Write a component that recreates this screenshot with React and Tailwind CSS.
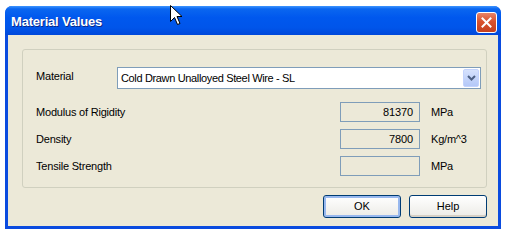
import React from 'react';

const font = { fontFamily: '"Liberation Sans", Arial, sans-serif' };

function Field({ label, value, unit }) {
  return (
    <div className="flex items-center h-[20px]">
      <span className="w-[304px] text-[11px] tracking-[-0.2px] text-black">{label}</span>
      <div className="w-[80px] h-[20px] border border-[#7F9DB9] bg-[#ECE9D8] flex items-center justify-end pr-[6px] text-[11px] tracking-[-0.1px] text-black">
        {value}
      </div>
      <span className="ml-[11px] text-[11px] tracking-[-0.2px] text-black">{unit}</span>
    </div>
  );
}

function XpButton({ children, isDefault }) {
  return (
    <button
      className={`w-[78px] h-[23px] rounded-[3px] border border-[#003C74] text-[11px] text-black bg-gradient-to-b from-white to-[#ECEBE6] ${
        isDefault ? 'shadow-[inset_0_0_0_2px_#98B8EE]' : 'shadow-[inset_0_-2px_0_#D6D0C5]'
      }`}
    >
      {children}
    </button>
  );
}

export default function App() {
  return (
    <div className="relative w-[511px] h-[241px] bg-white pt-[6px] pl-[5px]" style={font}>
      {/* Dialog window */}
      <div className="w-[496px] h-[223px] flex flex-col rounded-t-[7px] overflow-hidden bg-[#0A4BDF]">
        {/* Title bar */}
        <div className="h-[29px] flex items-center justify-between pt-[3px] pl-[6px] pr-[4px] bg-[linear-gradient(to_bottom,#3D95FF_0%,#0A66F0_10%,#0058EE_40%,#0055EA_75%,#0048DA_100%)]">
          <span className="text-white text-[13px] font-bold tracking-[-0.2px] [text-shadow:1px_1px_0_#0A2A8A]">
            Material Values
          </span>
          <div className="w-[21px] h-[21px] rounded-[3px] border border-white bg-[linear-gradient(to_bottom,#E8846A,#D9522D_45%,#C4401E)] flex items-center justify-center">
            <svg width="11" height="11" viewBox="0 0 11 11">
              <path d="M1.5 1.5 L9.5 9.5 M9.5 1.5 L1.5 9.5" stroke="white" strokeWidth="2" strokeLinecap="square" />
            </svg>
          </div>
        </div>

        {/* Body */}
        <div className="flex-1 mx-[3px] mb-[3px] bg-[#ECE9D8] pt-[14px] pl-[14px] flex flex-col">
          {/* Group box */}
          <div className="w-[465px] h-[139px] border border-[#D0D0BF] rounded-[3px] pl-[13px] pt-[17px] flex flex-col">
            <div className="flex items-center h-[22px]">
              <span className="w-[81px] text-[11px] tracking-[-0.2px] text-black -mt-[4px]">Material</span>
              <div className="w-[364px] h-[22px] border border-[#7F9DB9] bg-white flex items-center justify-between pl-[3px] pr-[1px]">
                <span className="text-[11px] tracking-[-0.35px] text-black">Cold Drawn Unalloyed Steel Wire - SL</span>
                <div className="w-[16px] h-[18px] rounded-[2px] bg-[linear-gradient(to_bottom,#D6E2FD,#B4C8F8)] border border-[#C3D3FD] flex items-center justify-center">
                  <svg width="9" height="6" viewBox="0 0 9 6">
                    <path d="M1 1 L4.5 4.5 L8 1" stroke="#4D6185" strokeWidth="2" fill="none" />
                  </svg>
                </div>
              </div>
            </div>

            <div className="mt-[13px] flex flex-col gap-[7px]">
              <Field label="Modulus of Rigidity" value="81370" unit="MPa" />
              <Field label="Density" value="7800" unit="Kg/m^3" />
              <Field label="Tensile Strength" value="" unit="MPa" />
            </div>
          </div>

          {/* Buttons */}
          <div className="flex justify-end gap-[8px] mt-[7px] w-[465px]">
            <XpButton isDefault>OK</XpButton>
            <XpButton>Help</XpButton>
          </div>
        </div>
      </div>

      {/* Mouse cursor */}
      <svg className="absolute left-[170px] top-[5px]" width="13" height="21" viewBox="0 0 13 21">
        <path
          d="M0.5 0.5 L0.5 16.5 L4.5 12.5 L7.5 19.5 L10 18.5 L7 11.5 L12 11.5 Z"
          fill="white"
          stroke="black"
          strokeWidth="1"
        />
      </svg>
    </div>
  );
}
